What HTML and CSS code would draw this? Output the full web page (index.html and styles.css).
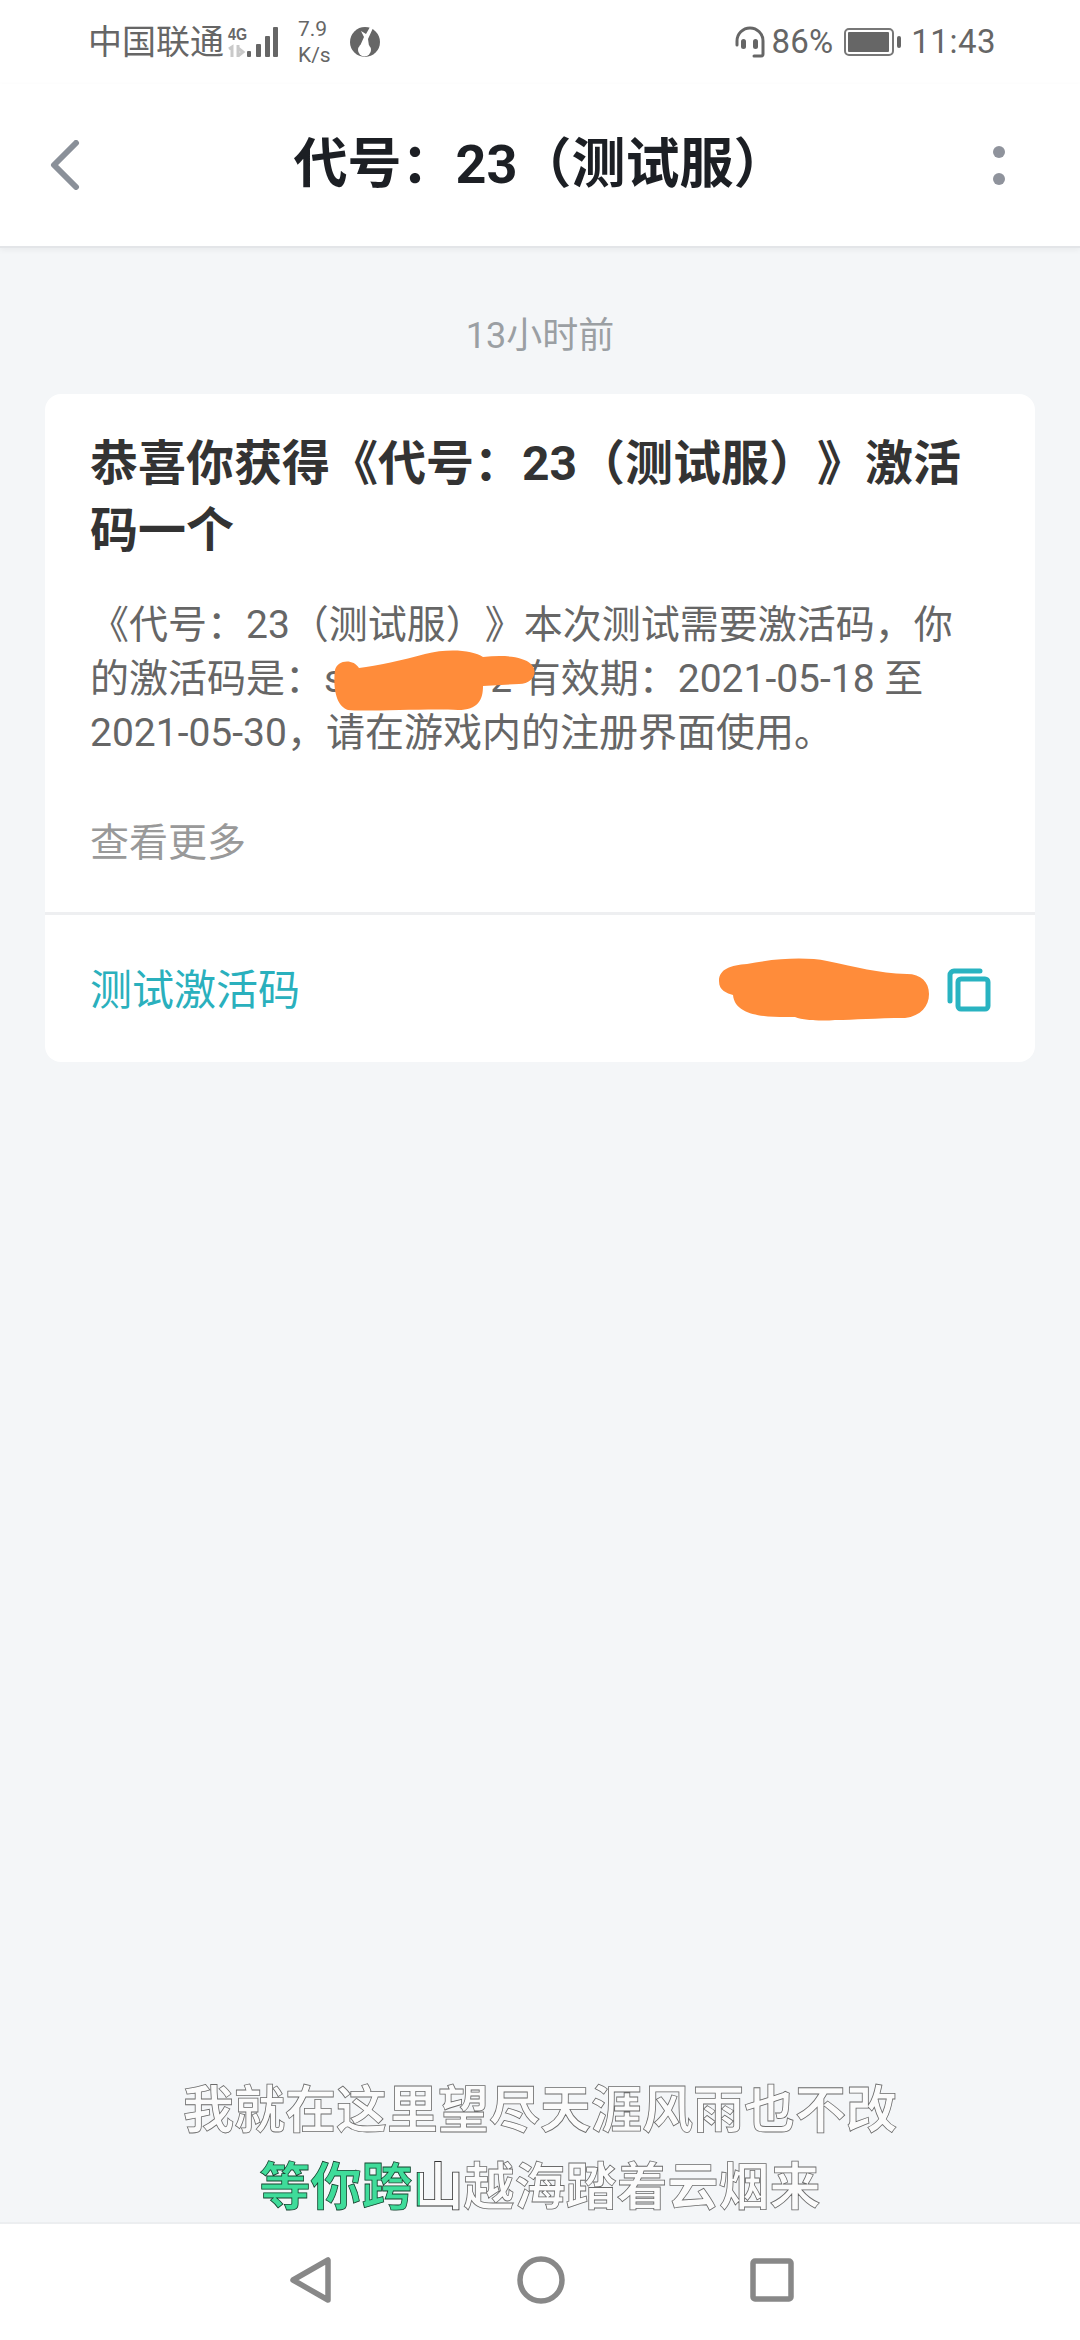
FILE: index.html
```html
<!DOCTYPE html>
<html lang="zh-CN">
<head>
<meta charset="utf-8">
<title>代号&#xFF1A;23&#xFF08;测试服&#xFF09;</title>
<link rel="stylesheet" href="styles.css">
</head>
<body>
<div class="page">
  <div class="status">
    <div class="status-side">
      <span class="carrier">中国联通</span>
      <svg class="signal" width="54" height="34" viewBox="0 0 54 34">
        <text class="net" x="2" y="15" textLength="19" lengthAdjust="spacingAndGlyphs">4G</text>
        <path class="net-sub" d="M3 24l3-2v10M12 20v12M12 23l5 4-5 4" />
        <rect class="bar" x="21" y="26" width="4" height="6" rx="1"/>
        <rect class="bar" x="30" y="19" width="5" height="13" rx="1"/>
        <rect class="bar" x="39" y="11" width="5" height="21" rx="1"/>
        <rect class="bar" x="47" y="2" width="5" height="30" rx="1"/>
      </svg>
      <span class="speed"><span>7.9</span><span>K/s</span></span>
      <svg class="music" width="30" height="30" viewBox="0 0 30 30">
        <circle class="fill-gray" cx="15" cy="15" r="15"/>
        <path class="fill-white" d="M11 4l5 3 4-7 3 1-5 11 1 7-9 0 4-9z"/>
        <circle class="fill-white" cx="14.500" cy="23" r="6.500"/>
      </svg>
    </div>
    <div class="status-side right">
      <svg class="headset" width="30" height="32" viewBox="0 0 30 32">
        <path class="line-gray" d="M2 19v-4a13 13 0 0 1 26 0v13a2 2 0 0 1-2 2h-7"/>
        <rect class="fill-gray" x="6" y="13" width="5" height="10" rx="2.500"/>
        <rect class="fill-gray" x="18" y="13" width="5" height="10" rx="2.500"/>
      </svg>
      <span class="pct">86%</span>
      <svg class="battery" width="58" height="28" viewBox="0 0 58 28">
        <rect class="batt-shell" x="1" y="1" width="48" height="26" rx="4"/>
        <rect class="fill-gray" x="4" y="4" width="41" height="20" rx="1"/>
        <rect class="fill-gray" x="53" y="8" width="4" height="12" rx="2"/>
      </svg>
      <span class="clock">11:43</span>
    </div>
  </div>

  <header class="topbar">
    <svg class="back" width="30" height="50" viewBox="0 0 30 50">
      <path class="line-nav" d="M26 3L4 25l22 22"/>
    </svg>
    <h1 class="title">代号&#xFF1A;23&#xFF08;测试服&#xFF09;</h1>
    <div class="more"><i></i><i></i></div>
  </header>

  <main class="content">
    <div class="time">13小时前</div>
    <section class="card">
      <div class="card-body">
        <h2 class="card-title">恭喜你获得《代号&#xFF1A;23&#xFF08;测试服&#xFF09;》激活码一个</h2>
        <p class="card-text">《代号&#xFF1A;23&#xFF08;测试服&#xFF09;》本次测试需要激活码&#xFF0C;你的激活码是&#xFF1A;s<span class="gap"></span>2 有效期&#xFF1A;2021-05-18 至 2021-05-30&#xFF0C;请在游戏内的注册界面使用。</p>
        <div class="card-more">查看更多</div>
        <svg class="scribble one" width="204" height="62" viewBox="0 0 204 62">
          <path class="blob" d="M2 20C4 10 20 8 26 18 44 16 70 10 92 4 115-2 140 0 150 7 170 5 190 6 198 14 206 22 200 34 186 34L150 36C150 50 145 60 125 60 100 58 30 62 15 60 2 56 0 35 2 20z"/>
        </svg>
      </div>
      <div class="code-row">
        <span class="code-label">测试激活码</span>
        <div class="code-value">
          <svg class="scribble-inline" width="212" height="64" viewBox="0 0 212 64">
            <path class="blob" d="M2 24C2 12 14 8 30 7 60 1 90 0 110 4c30 6 50 12 80 13 14 0 22 8 22 20s-8 22-24 24c-30 0-50 2-70 2-10 1-30 1-40-3-20 0-60 2-62-22C10 36 2 34 2 24z"/>
          </svg>
          <svg class="copy" width="44" height="44" viewBox="0 0 44 44">
            <path class="line-teal" d="M33 3H7a4 4 0 0 0-4 4v26"/>
            <rect class="line-teal" x="11" y="11" width="30" height="30" rx="3"/>
          </svg>
        </div>
      </div>
    </section>
  </main>

  <div class="lyrics">
    <div class="lyric">我就在这里望尽天涯风雨也不改</div>
    <div class="lyric"><span class="sung">等你跨</span><span class="singing">山</span>越海踏着云烟来</div>
  </div>

  <nav class="softkeys">
    <svg width="43" height="48" viewBox="0 0 43 48"><path class="line-key" d="M39 4v40L4 24z"/></svg>
    <svg width="48" height="48" viewBox="0 0 48 48"><circle class="line-key" cx="24" cy="24" r="21"/></svg>
    <svg width="44" height="44" viewBox="0 0 44 44"><rect class="line-key" x="3" y="3" width="38" height="38" rx="2"/></svg>
  </nav>
</div>
</body>
</html>
```
FILE: styles.css
```css
* { box-sizing: border-box; }
html, body { margin: 0; padding: 0; }
body {
  font-family: Roboto, "Noto Sans CJK SC", sans-serif;
  background: #f4f6f8;
  text-spacing-trim: space-all;
  font-feature-settings: "chws" 0, "palt" 0;
}
.page {
  position: relative;
  width: 1080px;
  height: 2340px;
  display: flex;
  flex-direction: column;
  overflow: hidden;
  background: #f4f6f8;
}

/* status bar */
.status {
  height: 84px;
  padding: 0 84px 0 88px;
  background: #fff;
  display: flex;
  align-items: center;
  justify-content: space-between;
  color: #666;
}
.status-side { display: flex; align-items: center; }
.carrier { font-size: 34px; line-height: 40px; width: 136px; white-space: nowrap; }
.signal { margin-left: 2px; overflow: visible; }
.net { font-family: "Liberation Sans", sans-serif; font-size: 17px; font-weight: 700; fill: #666; }
.net-sub { fill: none; stroke: #c9c9c9; stroke-width: 3; }
.bar { fill: #666; }
.speed {
  display: flex;
  flex-direction: column;
  margin-left: 18px;
  font-size: 21px;
  line-height: 26px;
  width: 34px;
  color: #666;
}
.music { margin-left: 18px; }
.fill-gray { fill: #666; }
.fill-white { fill: #fff; }
.line-gray { fill: none; stroke: #666; stroke-width: 3; stroke-linecap: round; }
.right .pct { font-size: 33px; margin-left: 6px; line-height: 40px; letter-spacing: 0.2px; }
.battery { margin-left: 11px; }
.batt-shell { fill: none; stroke: #777; stroke-width: 2; }
.clock { font-size: 33px; margin-left: 9px; line-height: 40px; letter-spacing: 0.5px; }

/* top bar */
.topbar {
  position: relative;
  z-index: 1;
  height: 164px;
  padding: 0 75px 0 50px;
  background: #fff;
  display: flex;
  align-items: center;
  justify-content: space-between;
  border-bottom: 2px solid #e3e5e8;
  box-shadow: 0 2px 6px rgba(0, 0, 0, 0.05);
}
.back { flex: none; margin-right: 8px; }
.line-nav { fill: none; stroke: #8a9099; stroke-width: 6; stroke-linecap: round; stroke-linejoin: round; }
.title {
  margin: 0;
  font-size: 54px;
  line-height: 66px;
  font-weight: 700;
  color: #1c1f24;
  white-space: nowrap;
}
.more { width: 12px; display: flex; flex-direction: column; gap: 15px; }
.more i { display: block; width: 12px; height: 12px; border-radius: 50%; background: #8f939c; }

/* content */
.content { flex: 1; padding: 0 45px; display: flex; flex-direction: column; }
.time {
  margin-top: 64px;
  height: 48px;
  line-height: 48px;
  text-align: center;
  font-size: 36px;
  color: #9b9fa3;
}
.card {
  margin-top: 34px;
  background: #fff;
  border-radius: 16px;
  display: flex;
  flex-direction: column;
}
.card-body { position: relative; padding: 36px 45px 0; height: 521px; border-bottom: 3px solid #eeeff1; }
.card-title {
  margin: 0;
  font-size: 48px;
  line-height: 67px;
  font-weight: 700;
  color: #333;
}
.card-text {
  margin: 34px 0 0;
  font-size: 39px;
  line-height: 54px;
  color: #666;
}
.gap { display: inline-block; width: 146px; height: 10px; }
.card-more {
  margin-top: 57px;
  font-size: 39px;
  line-height: 52px;
  color: #999;
}
.scribble { position: absolute; }
.scribble.one { left: 288px; top: 256px; }
.blob { fill: #ff8c3a; }

.code-row {
  flex: none;
  height: 147px;
  padding: 0 44px 0 45px;
  display: flex;
  align-items: center;
  justify-content: space-between;
}
.code-label { font-size: 42px; line-height: 52px; margin-top: 4px; color: #2ab0bd; }
.code-value { display: flex; align-items: center; gap: 18px; }
.copy { margin-top: 2px; }
.line-teal { fill: none; stroke: #29b3c1; stroke-width: 5; stroke-linecap: round; }

/* lyric overlay */
.lyrics {
  position: absolute;
  left: 0;
  right: 0;
  top: 2072px;
  text-align: center;
}
.lyric {
  height: 77px;
  line-height: 77px;
  font-size: 51px;
  font-weight: 700;
  white-space: nowrap;
  color: #fbfbfb;
  -webkit-text-stroke: 0.8px #6b6b6b;
}
.sung { color: #3fdc9a; -webkit-text-stroke: 0.8px #123d2a; }
.singing {
  background: linear-gradient(90deg, #3fdc9a 0, #3fdc9a 16%, #fbfbfb 16%);
  -webkit-background-clip: text;
  background-clip: text;
  color: transparent;
  -webkit-text-stroke: 0.8px #333;
}

/* soft keys */
.softkeys {
  height: 118px;
  padding: 0 286px 4px 289px;
  background: #fff;
  border-top: 2px solid #eceef0;
  display: flex;
  align-items: center;
  justify-content: space-between;
}
.line-key { fill: none; stroke: #888; stroke-width: 5.500; stroke-linejoin: round; }
```
